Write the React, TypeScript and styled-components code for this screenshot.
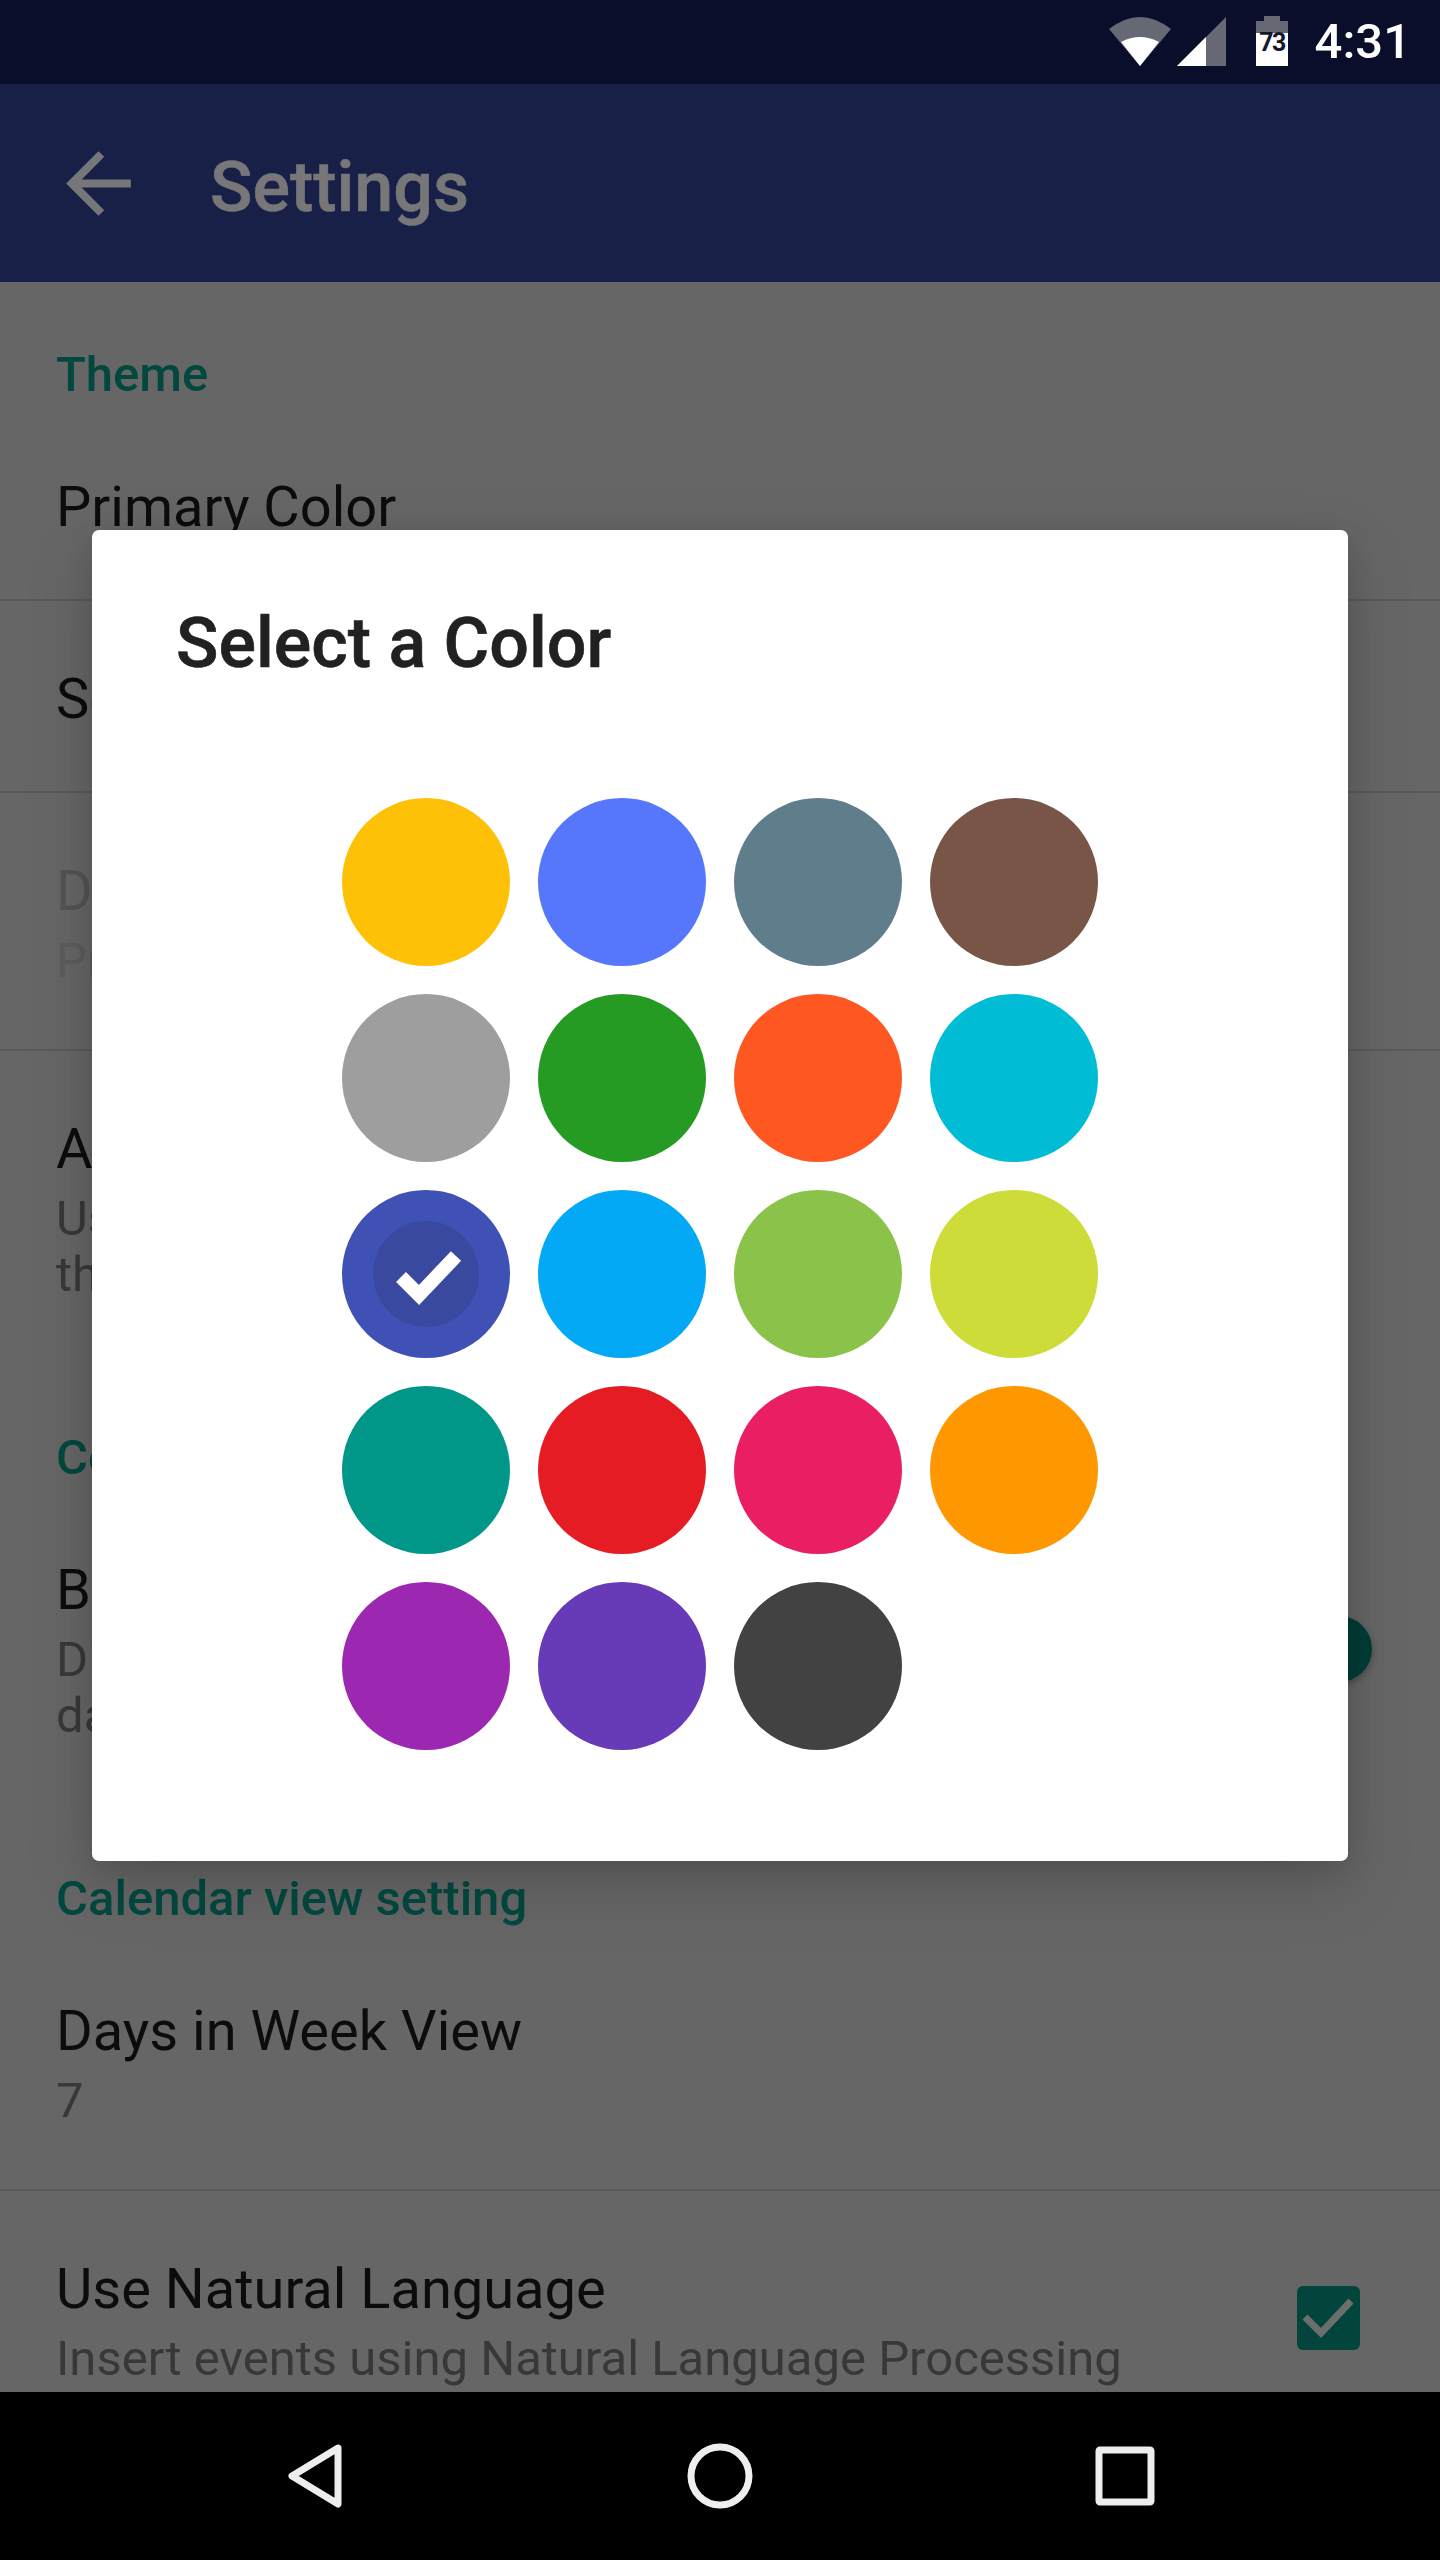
import React from 'react'
import styled, { createGlobalStyle } from 'styled-components'

const GlobalStyle = createGlobalStyle`
  html, body {
    margin: 0;
    padding: 0;
    background: #000;
  }

  * {
    box-sizing: border-box;
  }
`

const Screen = styled.div`
  width: 1440px;
  height: 2560px;
  display: flex;
  flex-direction: column;
  font-family: Roboto, 'Liberation Sans', sans-serif;
  overflow: hidden;
`

const StatusBar = styled.div`
  height: 84px;
  flex: none;
  background: #0b0e2a;
  color: #fff;
  display: flex;
  align-items: center;
  justify-content: flex-end;
  padding-right: 29px;
`

const WifiIcon = styled.svg`
  width: 62px;
  height: 49px;
  margin-right: 6px;
  margin-top: -1px;
`

const SignalIcon = styled.svg`
  width: 49px;
  height: 49px;
  margin-right: 30px;
  margin-top: -1px;
`

const BatteryIcon = styled.svg`
  width: 32px;
  height: 50px;
  margin-right: 27px;
  margin-top: -2px;
`

const BatteryLevel = styled.text`
  font-family: Roboto, sans-serif;
  font-size: 25px;
  font-weight: 700;
  letter-spacing: -1.5px;
  fill: #15172b;
  text-anchor: middle;
`

const Clock = styled.span`
  font-size: 49px;
  font-weight: 500;
  line-height: 1;
  margin-top: -2px;
`

const Main = styled.div`
  flex: 1;
  min-height: 0;
  position: relative;
  overflow: hidden;
  background: #666;
`

const Toolbar = styled.div`
  height: 198px;
  background: #192048;
  display: flex;
  align-items: center;
  padding-left: 50px;
  color: #777779;
`

const BackArrow = styled.svg`
  width: 97px;
  height: 97px;
  fill: currentColor;
  margin-right: 63px;
`

const ToolbarTitle = styled.h1`
  margin: 8px 0 0;
  font-size: 70px;
  font-weight: 500;
  line-height: 1;
  -webkit-text-stroke: 0.6px currentColor;
`

const SectionHeader = styled.div<{ $first?: boolean }>`
  padding: ${(p) => (p.$first ? 65 : 67)}px 56px 6px;
  font-size: 49px;
  font-weight: 500;
  line-height: 56px;
  color: #03483f;
`

const Row = styled.div<{ $divider?: boolean }>`
  display: flex;
  justify-content: space-between;
  min-height: 192px;
  padding: 70px 56px 60px;
  border-bottom: ${(p) => (p.$divider ? '2px solid #5a5a5a' : 'none')};
`

const RowText = styled.div`
  display: flex;
  flex-direction: column;
`

const RowTitle = styled.div<{ $disabled?: boolean }>`
  font-size: 56px;
  line-height: 56px;
  color: ${(p) => (p.$disabled ? '#545454' : '#0c0c0c')};
`

const RowSub = styled.div<{ $disabled?: boolean }>`
  font-size: 49px;
  line-height: 56px;
  color: ${(p) => (p.$disabled ? '#5c5c5c' : '#383838')};
  margin-top: 14px;

  & + & {
    margin-top: 0;
  }
`

const SwitchKnob = styled.div`
  width: 66px;
  height: 66px;
  border-radius: 50%;
  background: #003c36;
  align-self: center;
  margin: 0 12px 8px 0;
  box-shadow: 0 3px 7px rgba(0, 0, 0, 0.3);
`

const Checkbox = styled.svg`
  width: 63px;
  height: 64px;
  margin: 25px 24px 0 0;
`

const Dialog = styled.div`
  position: absolute;
  top: 446px;
  left: 92px;
  width: 1256px;
  height: 1331px;
  background: #fff;
  border-radius: 7px;
  box-shadow: 0 24px 70px rgba(0, 0, 0, 0.16), 0 8px 26px rgba(0, 0, 0, 0.1);
  padding: 72px 84px 0;
`

const DialogTitle = styled.h2`
  margin: 0;
  font-size: 70px;
  font-weight: 500;
  line-height: 82px;
  color: #212121;
  -webkit-text-stroke: 0.6px currentColor;
`

const ColorGrid = styled.div`
  display: grid;
  grid-template-columns: repeat(4, 168px);
  grid-auto-rows: 168px;
  gap: 28px;
  justify-content: center;
  margin-top: 114px;
`

const Swatch = styled.div<{ $color: string }>`
  border-radius: 50%;
  background: ${(p) => p.$color};
  display: flex;
  align-items: center;
  justify-content: center;
`

const SelectedRing = styled.div`
  width: 106px;
  height: 106px;
  border-radius: 50%;
  background: #3949a0;
`

const CheckMark = styled.svg`
  width: 106px;
  height: 106px;
  display: block;
`

const NavBar = styled.div`
  height: 168px;
  flex: none;
  background: #000;
  display: grid;
  grid-template-columns: repeat(3, 405px);
  justify-content: center;
  justify-items: center;
  align-items: center;
`

const NavIcon = styled.svg`
  width: 70px;
  height: 70px;
  fill: none;
  stroke: #eee;
  stroke-width: 7px;
`

const colors = [
  '#ffc107',
  '#5677fc',
  '#607d8b',
  '#795548',
  '#9e9e9e',
  '#259b24',
  '#ff5722',
  '#00bcd4',
  '#3f51b5',
  '#03a9f4',
  '#8bc34a',
  '#cddc39',
  '#009688',
  '#e51c23',
  '#e91e63',
  '#ff9800',
  '#9c27b0',
  '#673ab7',
  '#424242'
]

export default function App() {
  return (
    <Screen>
      <GlobalStyle />
      <StatusBar>
        <WifiIcon viewBox="0 0 62 49">
          <path d="M31 49L0 12Q31-12 62 12Z" fill="#666873" />
          <path d="M31 49L12 25Q31 15 50 25Z" fill="#fff" />
        </WifiIcon>
        <SignalIcon viewBox="0 0 49 49">
          <path d="M0 49L49 0V49Z" fill="#666873" />
          <path d="M0 49L29 20V49Z" fill="#fff" />
        </SignalIcon>
        <BatteryIcon viewBox="0 0 32 50">
          <path d="M8 0H24V5H32V18H0V5H8Z" fill="#666873" />
          <rect y="17" width="32" height="33" fill="#fff" />
          <BatteryLevel x="16" y="35">73</BatteryLevel>
        </BatteryIcon>
        <Clock>4:31</Clock>
      </StatusBar>

      <Main>
        <Toolbar>
          <BackArrow viewBox="0 0 24 24">
            <path d="M20 11H7.83l5.59-5.59L12 4l-8 8 8 8 1.41-1.41L7.83 13H20v-2z" />
          </BackArrow>
          <ToolbarTitle>Settings</ToolbarTitle>
        </Toolbar>

        <SectionHeader $first>Theme</SectionHeader>
        <Row $divider>
          <RowText>
            <RowTitle>Primary Color</RowTitle>
          </RowText>
        </Row>
        <Row $divider>
          <RowText>
            <RowTitle>Se</RowTitle>
          </RowText>
        </Row>
        <Row $divider>
          <RowText>
            <RowTitle $disabled>Da</RowTitle>
            <RowSub $disabled>Pr</RowSub>
          </RowText>
        </Row>
        <Row>
          <RowText>
            <RowTitle>Au</RowTitle>
            <RowSub>Us</RowSub>
            <RowSub>th</RowSub>
          </RowText>
        </Row>

        <SectionHeader>Co</SectionHeader>
        <Row>
          <RowText>
            <RowTitle>Bl</RowTitle>
            <RowSub>Di</RowSub>
            <RowSub>da</RowSub>
          </RowText>
          <SwitchKnob />
        </Row>

        <SectionHeader>Calendar view setting</SectionHeader>
        <Row $divider>
          <RowText>
            <RowTitle>Days in Week View</RowTitle>
            <RowSub>7</RowSub>
          </RowText>
        </Row>
        <Row>
          <RowText>
            <RowTitle>Use Natural Language</RowTitle>
            <RowSub>Insert events using Natural Language Processing</RowSub>
          </RowText>
          <Checkbox viewBox="0 0 63 64">
            <rect width="63" height="64" rx="6" fill="#03443c" />
            <path d="M8 31L24 47L54 15" fill="none" stroke="#6a6f6e" strokeWidth="7" />
          </Checkbox>
        </Row>

        <Dialog>
          <DialogTitle>Select a Color</DialogTitle>
          <ColorGrid>
            {colors.map((color) => (
              <Swatch key={color} $color={color}>
                {color === '#3f51b5' && (
                  <SelectedRing>
                    <CheckMark viewBox="0 0 106 106">
                      <path d="M28 56L46 74L83 35" fill="none" stroke="#fff" strokeWidth="14" />
                    </CheckMark>
                  </SelectedRing>
                )}
              </Swatch>
            ))}
          </ColorGrid>
        </Dialog>
      </Main>

      <NavBar>
        <NavIcon viewBox="0 0 70 70">
          <path d="M58 7L12 35L58 63Z" strokeLinejoin="round" />
        </NavIcon>
        <NavIcon viewBox="0 0 70 70">
          <circle cx="35" cy="35" r="29" />
        </NavIcon>
        <NavIcon viewBox="0 0 70 70">
          <rect x="9" y="9" width="52" height="52" rx="1" />
        </NavIcon>
      </NavBar>
    </Screen>
  )
}
